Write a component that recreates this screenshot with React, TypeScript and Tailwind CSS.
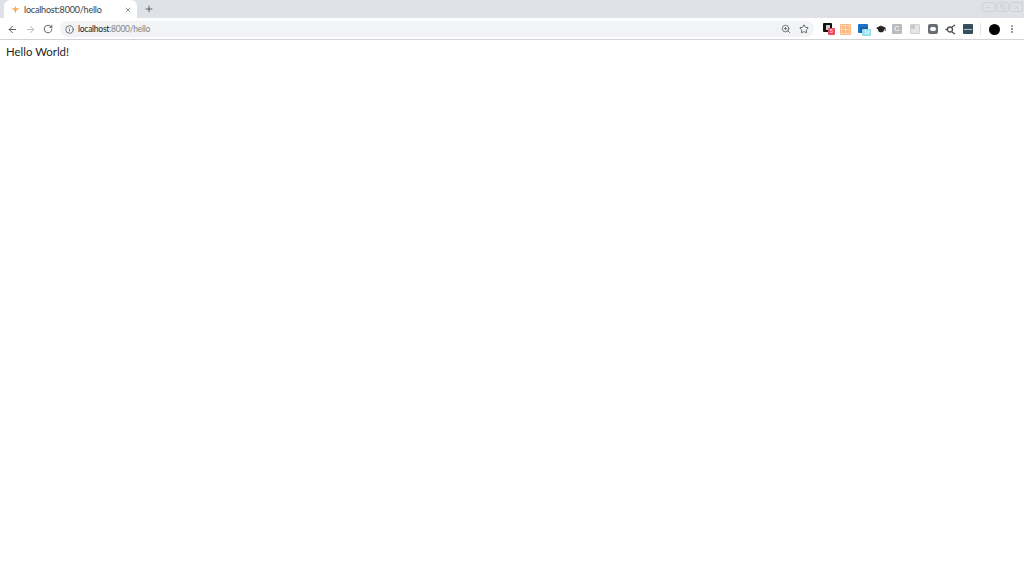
import React from 'react';
import { ArrowLeft, ArrowRight, RotateCw, Info, ZoomIn, Star, Plus, X, EllipsisVertical, GraduationCap, Minus, Copy } from 'lucide-react';

const WindowButton: React.FC<{ children: React.ReactNode }> = ({ children }) => (
  <div className="w-[13px] h-[10px] border border-[#cfd2d6] rounded-[2px] flex items-center justify-center text-[#c4c7cb]">
    {children}
  </div>
);

const Extensions: React.FC = () => (
  <div className="flex items-center gap-[6px] ml-[9px] shrink-0">
    {/* badge: black square */}
    <div className="relative w-[12px] h-[12px]">
      <div className="w-[9px] h-[9px] bg-[#111] rounded-[1px] flex items-center justify-center">
        <div className="w-[4px] h-[5px] bg-[#ccc]" />
      </div>
      <div className="absolute left-[5px] top-[5px] w-[7px] h-[7px] bg-[#f04866] rounded-[1px] text-white text-[5px] leading-[7px] text-center font-['Liberation_Sans',sans-serif]">5</div>
    </div>
    {/* orange reader */}
    <div className="w-[11px] h-[11px] ml-[-1px] border border-[#fbb57e] bg-[#fdd9bb] rounded-[1px] grid grid-cols-2 gap-[1px] p-[1px]">
      <div className="bg-[#fbb57e]" />
      <div className="bg-[#fbb57e]" />
      <div className="bg-[#fbb57e]" />
      <div className="bg-[#fbb57e]" />
    </div>
    {/* blue window */}
    <div className="relative w-[13px] h-[13px] ml-[1px] mt-[2px]">
      <div className="w-[10px] h-[9px] bg-[#1a73c8] rounded-[1px]">
        <div className="h-[3px]" />
        <div className="ml-[2px] w-[8px] h-[6px] bg-[#1a5fa8]" />
      </div>
      <div className="absolute left-[4px] top-[5px] w-[9px] h-[7px] bg-[#8fdfee] rounded-[1px] text-white text-[5px] leading-[7px] text-center font-['Liberation_Sans',sans-serif]">3d</div>
    </div>
    <GraduationCap size={10} className="text-[#222] fill-[#222] ml-[-1px]" />
    <div className="w-[10px] h-[10px] bg-[#b9bbbd] rounded-[1px] text-white text-[8px] leading-[10px] text-center font-['Liberation_Sans',sans-serif]">C</div>
    <div className="w-[10px] h-[10px] ml-[2px] bg-[#e4e5e6] border border-[#cfd0d2] rounded-[1px]">
      <div className="w-[4px] h-[4px] bg-[#c6c8ca]" />
    </div>
    <div className="w-[10px] h-[10px] ml-[2px] bg-[#6a6e72] rounded-[2px] flex items-center justify-center">
      <div className="w-[6px] h-[4px] bg-white rounded-[2px]" />
    </div>
    <svg width="11" height="11" viewBox="0 0 11 11" className="ml-[1px]">
      <circle cx="5" cy="5.5" r="2.5" fill="none" stroke="#4a4d51" strokeWidth="1.3" />
      <path d="M7 3 L10 1 M7 8 L10 10 M0.5 5.5 L2.5 5.5" stroke="#4a4d51" strokeWidth="1.3" />
    </svg>
    <div className="w-[10px] h-[10px] ml-[1px] bg-[#34505f] rounded-[1px] flex items-center justify-center">
      <div className="w-[8px] h-[1px] bg-[#b5c2ca]" />
    </div>
  </div>
);

const BrowserChrome: React.FC = () => (
  <div className="font-['Lato',sans-serif]">
    {/* Tab strip */}
    <div className="h-[18px] bg-[#dee1e6] flex pl-[4px]">
      <div className="w-[133px] h-[18px] bg-white rounded-t-[6px] flex items-center pl-[7px] pr-[5px]">
        <svg width="9" height="9" viewBox="0 0 10 10" className="mt-[1px]">
          <path d="M5 1 L6 4 L9.5 3.5 L6 6 L5 9.5 L4 6 L0.5 3.5 L4 4 Z" fill="#f5a742" />
        </svg>
        <span className="ml-[4px] mt-[1px] text-[9px] tracking-[-0.2px] leading-none text-[#3c4043] whitespace-nowrap">localhost:8000/hello</span>
        <X size={8} strokeWidth={2} className="ml-auto mt-[1px] text-[#5f6368]" />
      </div>
      <Plus size={10} strokeWidth={2} className="ml-[7px] mt-[4px] text-[#45484c]" />
      <div className="ml-auto flex gap-[1px] pr-[1px] pt-[2px]">
        <WindowButton><Minus size={7} /></WindowButton>
        <WindowButton><Copy size={6} /></WindowButton>
        <WindowButton><X size={7} /></WindowButton>
      </div>
    </div>
    {/* Toolbar */}
    <div className="h-[22px] bg-white border-b border-[#d0d2d5] flex items-center pt-[1px] pl-[7px] pr-[7px]">
      <ArrowLeft size={11} strokeWidth={2} className="shrink-0 text-[#4a4d51]" />
      <ArrowRight size={11} strokeWidth={2} className="shrink-0 ml-[7px] text-[#b4b6b9]" />
      <RotateCw size={10} strokeWidth={2} className="shrink-0 ml-[7px] text-[#4a4d51]" />
      {/* Omnibox */}
      <div className="ml-[7px] flex-1 h-[16px] bg-[#f1f3f4] rounded-full flex items-center pl-[5px] pr-[5px]">
        <Info size={9} strokeWidth={2} className="text-[#4a4d51]" />
        <span className="ml-[4px] text-[8.5px] tracking-[-0.25px] leading-none text-[#202124] whitespace-nowrap">
          localhost<span className="text-[#80868b]">:8000/hello</span>
        </span>
        <ZoomIn size={10} strokeWidth={2} className="ml-auto text-[#5f6368]" />
        <Star size={10} strokeWidth={2} className="ml-[8px] text-[#4a4d51]" />
      </div>
      <Extensions />
      <div className="shrink-0 ml-[7px] w-[1px] h-[12px] bg-[#e4e5e7]" />
      <div className="shrink-0 ml-[8px] w-[11px] h-[11px] rounded-full bg-black" />
      <EllipsisVertical size={10} strokeWidth={2.5} className="shrink-0 ml-[7px] text-[#5f6368]" />
    </div>
  </div>
);

export default function App() {
  return (
    <div className="w-[1024px] h-[581px] bg-white overflow-hidden">
      <BrowserChrome />
      <div className="pl-[6px] pt-[4px] text-[11.4px] leading-[15px] text-[#1f1f1f] font-['Lato',sans-serif]">
        Hello World!
      </div>
    </div>
  );
}
